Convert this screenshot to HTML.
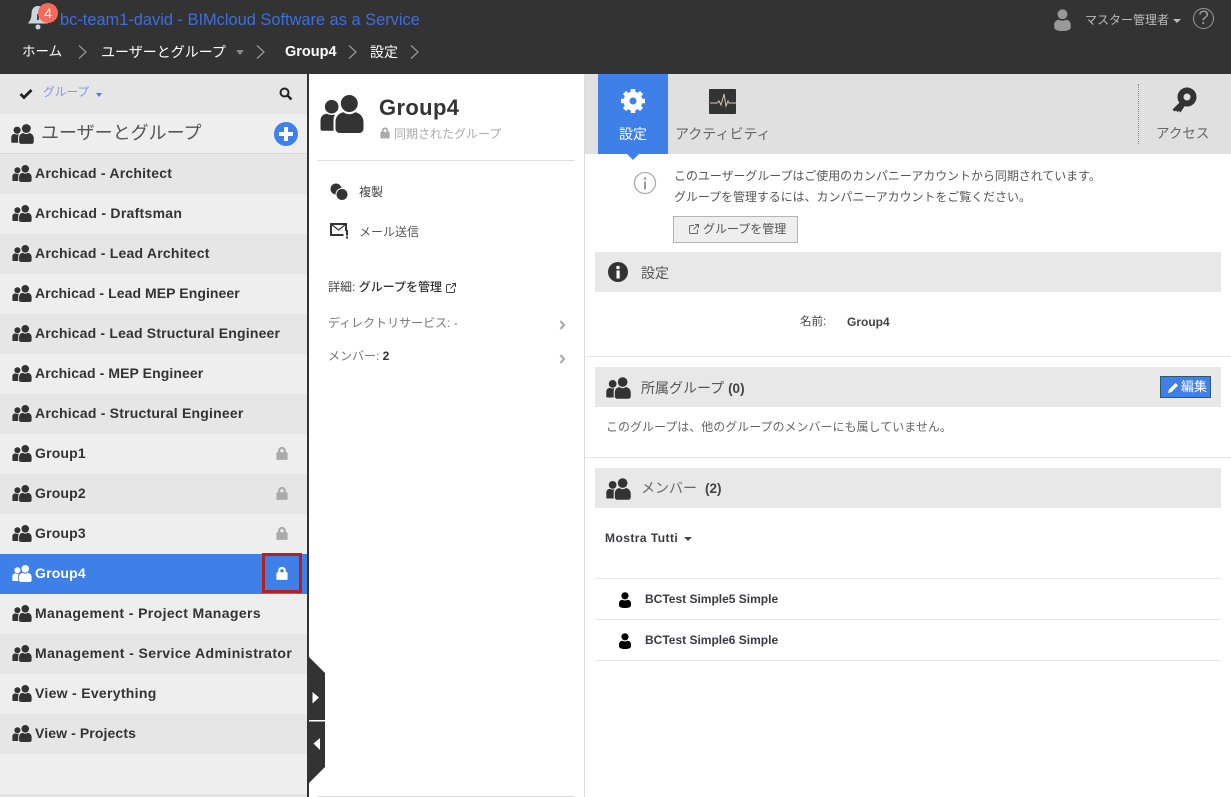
<!DOCTYPE html>
<html lang="ja"><head><meta charset="utf-8"><title>BIMcloud</title>
<style>
html,body{margin:0;padding:0;width:1231px;height:797px;overflow:hidden;background:#fff}
body{position:relative;font-family:"Liberation Sans","Noto Sans CJK JP",sans-serif;color:#333}
.a{position:absolute}
.t{position:absolute;white-space:nowrap;line-height:20px;height:20px}
.row{position:absolute;left:0;width:307px;height:40px}
.row b{position:absolute;left:35px;top:9px;line-height:20px;font-size:14px;color:#333;white-space:nowrap;letter-spacing:.18px}
.row svg.g{position:absolute;left:12px;top:11px}
.row svg.l{position:absolute;left:276px;top:12px}
.d{background:#e6e6e6}.e{background:#eee}
.hd{position:absolute;left:595px;width:626px;height:40px;background:#e8e8e8}
.ln{position:absolute;height:1px;background:#e6e6e6}
.jp{color:#555;font-size:12px}
</style></head><body>
<svg width="0" height="0" style="position:absolute">
<defs>
<symbol id="grp" viewBox="0 0 44 38"><circle cx="11.700" cy="11.700" r="6.800"/><path d="M.5 34V26C.5 21.500 3 19 7 18.800 8.500 19.500 10 20 11.700 20c1.300 0 2.300-.2 3.300-.6-1 1.800-1.500 4-1.500 6.600V34c0 .7.100 1.300.3 1.800H2.500C1.300 35.800.5 35 .5 34z"/><circle cx="29.300" cy="8.500" r="8.500"/><path d="M15.500 33.500V27c0-5.500 3.500-9 8-9.800 1.700 1.300 3.700 2 5.800 2s4.100-.7 5.800-2c4.500.8 8.400 4.300 8.400 9.800v6.500c0 2.800-2 4.500-4.500 4.500H20c-2.500 0-4.500-1.700-4.500-4.500z"/></symbol>
<symbol id="lock" viewBox="0 0 14 16"><path fill-rule="evenodd" d="M2.500 6.500V4.800C2.500 2 4.500.3 7 .3s4.500 1.700 4.500 4.500v1.700h1c.6 0 1 .4 1 1v7c0 .6-.4 1-1 1h-11c-.6 0-1-.4-1-1v-7c0-.6.400-1 1-1zM5 6.500h4V4.800C9 3.500 8.200 2.700 7 2.700S5 3.500 5 4.800z"/></symbol>
<symbol id="ext" viewBox="0 0 10 10"><path d="M5 1.500H1.500a1 1 0 0 0-1 1v6a1 1 0 0 0 1 1h6a1 1 0 0 0 1-1V5.500M6 .5h3.500V4M9.300.7 4.500 5.500" fill="none" stroke="currentColor" stroke-width="1"/></symbol>
<symbol id="usr" viewBox="0 0 12 16"><circle cx="6" cy="3.800" r="3.600"/><path d="M0 13.500V11.500C0 9.200 1.600 8 3.200 7.800 4 8.200 5 8.500 6 8.500s2-.3 2.800-.7C10.400 8 12 9.200 12 11.500v2c0 1.500-2.500 2.500-6 2.500S0 15 0 13.500z"/></symbol>
</defs></svg>

<!-- top bar -->
<div class="a" style="left:0;top:0;width:1231px;height:74px;background:#333"></div>
<svg class="a" style="left:27px;top:5px" width="22" height="26" viewBox="0 0 22 26"><path d="M11 1C7 1 4.500 4 4.500 9c0 5-2 7-3.500 9.500h20C19.500 16 17.500 14 17.500 9c0-5-2.500-8-6.500-8z" fill="#c9d6dc"/><circle cx="11" cy="22" r="2.500" fill="#c9d6dc"/><rect x="10" y="9" width="2" height="6" fill="#444"/></svg>
<div class="a" style="left:38px;top:3px;width:20px;height:20px;border-radius:50%;background:#f26b5b;color:#fff;font-size:14px;line-height:20px;text-align:center">4</div>
<div class="t" style="left:60px;top:10px;font-size:16.400px;color:#3d6fdc">bc-team1-david - BIMcloud Software as a Service</div>
<div class="t" style="left:22px;top:42px;font-size:13.500px;color:#fff">ホーム</div>
<div class="t" style="left:101px;top:42px;font-size:14px;color:#fff">ユーザーとグループ</div>
<div class="a" style="left:236px;top:50px;border:4.500px solid transparent;border-top:5px solid #888;border-bottom:0"></div>
<div class="t" style="left:285px;top:42px;font-size:14.500px;font-weight:bold;color:#fff">Group4</div>
<div class="t" style="left:370px;top:42px;font-size:14px;color:#fff">設定</div>
<svg class="a" style="left:76px;top:44px" width="360" height="16" fill="none" stroke="#999" stroke-width="1.200"><path d="M3 1.500l7 6.500-7 6.500M181 1.500l7 6.500-7 6.500M273 1.500l7 6.500-7 6.500M335 1.500l7 6.500-7 6.500"/></svg>
<svg class="a" style="left:1054px;top:9px;fill:#999" width="17" height="22"><use href="#usr"/></svg>
<div class="t" style="left:1085px;top:10px;font-size:12px;color:#bbb">マスター管理者</div>
<div class="a" style="left:1173px;top:19px;border:4px solid transparent;border-top:4px solid #bbb;border-bottom:0"></div>
<div class="a" style="left:1193px;top:8px;width:19px;height:19px;border:1.500px solid #999;border-radius:50%;color:#999;font-size:19px;line-height:19px;text-align:center">?</div>

<!-- left sidebar -->
<div class="a" style="left:0;top:74px;width:307px;height:723px;background:#eee"></div>
<div class="a" style="left:0;top:74px;width:307px;height:40px;background:#e6e6e6"></div>
<div class="a" style="left:307px;top:74px;width:2px;height:723px;background:#333"></div>
<svg class="a" style="left:19px;top:88px" width="14" height="12"><path d="M1.500 6l3.500 3.500L12.500 2" fill="none" stroke="#222" stroke-width="2.800"/></svg>
<div class="t" style="left:43px;top:83px;font-size:11.700px;color:#7b9be8">グループ</div>
<div class="a" style="left:96px;top:93px;border:3.500px solid transparent;border-top:4px solid #4a7fe0;border-bottom:0"></div>
<svg class="a" style="left:279px;top:87px" width="14" height="14"><circle cx="5.500" cy="5.500" r="4" fill="none" stroke="#222" stroke-width="2"/><path d="M8.500 8.500l4 4" stroke="#222" stroke-width="2.500"/></svg>
<svg class="a" style="left:11px;top:124px;fill:#333" width="23" height="20"><use href="#grp"/></svg>
<div class="t" style="left:41px;top:123px;font-size:18px;color:#555">ユーザーとグループ</div>
<div class="a" style="left:274px;top:122px;width:24px;height:24px;border-radius:50%;background:#3f80ea"></div>
<div class="a" style="left:279px;top:132px;width:14px;height:4px;background:#fff"></div>
<div class="a" style="left:284px;top:127px;width:4px;height:14px;background:#fff"></div>
<div class="a" style="left:0;top:153px;width:307px;height:1px;background:#d8d8d8"></div>

<div class="row d" style="top:154px"><svg class="g" width="20" height="17" fill="#333"><use href="#grp"/></svg><b style="letter-spacing:.23px">Archicad - Architect</b></div>
<div class="row e" style="top:194px"><svg class="g" width="20" height="17" fill="#333"><use href="#grp"/></svg><b style="letter-spacing:.28px">Archicad - Draftsman</b></div>
<div class="row d" style="top:234px"><svg class="g" width="20" height="17" fill="#333"><use href="#grp"/></svg><b style="letter-spacing:.22px">Archicad - Lead Architect</b></div>
<div class="row e" style="top:274px"><svg class="g" width="20" height="17" fill="#333"><use href="#grp"/></svg><b style="letter-spacing:.07px">Archicad - Lead MEP Engineer</b></div>
<div class="row d" style="top:314px"><svg class="g" width="20" height="17" fill="#333"><use href="#grp"/></svg><b>Archicad - Lead Structural Engineer</b></div>
<div class="row e" style="top:354px"><svg class="g" width="20" height="17" fill="#333"><use href="#grp"/></svg><b style="letter-spacing:.09px">Archicad - MEP Engineer</b></div>
<div class="row d" style="top:394px"><svg class="g" width="20" height="17" fill="#333"><use href="#grp"/></svg><b style="letter-spacing:.21px">Archicad - Structural Engineer</b></div>
<div class="row e" style="top:434px"><svg class="g" width="20" height="17" fill="#333"><use href="#grp"/></svg><b>Group1</b><svg class="l" width="12" height="15" fill="#aaa"><use href="#lock"/></svg></div>
<div class="row d" style="top:474px"><svg class="g" width="20" height="17" fill="#333"><use href="#grp"/></svg><b>Group2</b><svg class="l" width="12" height="15" fill="#aaa"><use href="#lock"/></svg></div>
<div class="row e" style="top:514px"><svg class="g" width="20" height="17" fill="#333"><use href="#grp"/></svg><b>Group3</b><svg class="l" width="12" height="15" fill="#aaa"><use href="#lock"/></svg></div>
<div class="row" style="top:554px;background:#3f7fe8"><svg class="g" width="20" height="17" fill="#fff"><use href="#grp"/></svg><b style="color:#fff">Group4</b><svg class="l" width="12" height="15" fill="#fff"><use href="#lock"/></svg></div>
<div class="a" style="left:262px;top:553px;width:34px;height:34px;border:3px solid #b22222"></div>
<div class="row e" style="top:594px"><svg class="g" width="20" height="17" fill="#333"><use href="#grp"/></svg><b style="letter-spacing:.39px">Management - Project Managers</b></div>
<div class="row d" style="top:634px"><svg class="g" width="20" height="17" fill="#333"><use href="#grp"/></svg><b style="letter-spacing:.42px">Management - Service Administrator</b></div>
<div class="row e" style="top:674px"><svg class="g" width="20" height="17" fill="#333"><use href="#grp"/></svg><b style="letter-spacing:.3px">View - Everything</b></div>
<div class="row d" style="top:714px"><svg class="g" width="20" height="17" fill="#333"><use href="#grp"/></svg><b style="letter-spacing:.11px">View - Projects</b></div>
<div class="a" style="left:0;top:794px;width:307px;height:3px;background:#e4e4e4"></div>

<!-- collapse handles -->
<svg class="a" style="left:307px;top:657px" width="18" height="127"><path d="M0 0h2l16 16v94L2 126v1H0z" fill="#333"/><rect x="2" y="63" width="16" height="1.500" fill="#fff"/><path d="M5.500 35l6.500 5.500-6.500 6z" fill="#fff"/><path d="M13 81l-6.500 5.500 6.500 6.500z" fill="#fff"/></svg>

<!-- middle column -->
<div class="a" style="left:584px;top:74px;width:1px;height:723px;background:#dcdcdc"></div>
<svg class="a" style="left:320px;top:95px;fill:#333" width="44" height="38"><use href="#grp"/></svg>
<div class="t" style="left:379px;top:95px;font-size:22px;font-weight:bold;line-height:26px;height:26px;color:#333;letter-spacing:.35px">Group4</div>
<svg class="a" style="left:380px;top:127px" width="10" height="12" fill="#aaa"><use href="#lock"/></svg>
<div class="t" style="left:394px;top:124px;font-size:12px;color:#aaa">同期されたグループ</div>
<div class="a" style="left:318px;top:160px;width:256px;height:1px;background:#ddd"></div>
<svg class="a" style="left:330px;top:183px" width="19" height="18"><circle cx="6" cy="6" r="5.500" fill="#333"/><circle cx="12" cy="11.500" r="6.500" fill="#fff"/><circle cx="12" cy="11.500" r="5.500" fill="#333"/></svg>
<div class="t jp" style="left:359px;top:182px;color:#444">複製</div>
<svg class="a" style="left:330px;top:223px" width="19" height="18"><rect x="1" y="1" width="15" height="11" fill="none" stroke="#333" stroke-width="2"/><path d="M1 1l7.500 6 7.500-6" fill="none" stroke="#333" stroke-width="1.200"/><rect x="13.500" y="8" width="4.500" height="6" fill="#fff"/><rect x="16" y="7" width="2" height="5.500" fill="#333"/><rect x="16" y="13.500" width="2" height="2" fill="#333"/></svg>
<div class="t jp" style="left:359px;top:222px">メール送信</div>
<div class="t jp" style="left:328px;top:277px;color:#444">詳細: <span style="color:#333;font-weight:500">グループを管理</span></div>
<svg class="a" style="left:446px;top:283px;color:#444" width="10" height="10"><use href="#ext"/></svg>
<div class="t" style="left:328px;top:313px;font-size:12px;color:#777">ディレクトリサービス: -</div>
<div class="t" style="left:328px;top:346px;font-size:12px;color:#777">メンバー: <b style="color:#333;font-size:12px">2</b></div>
<svg class="a" style="left:559px;top:319px" width="8" height="50" fill="none" stroke="#aaa" stroke-width="2.200"><path d="M1.500 2l3.500 4-3.500 4M1.500 36l3.500 4-3.500 4"/></svg>

<!-- tabs -->
<div class="a" style="left:585px;top:74px;width:646px;height:80px;background:#e0e0e0"></div>
<div class="a" style="left:598px;top:74px;width:70px;height:80px;background:#3f7fe8"></div>
<div class="a" style="left:627px;top:154px;border:6px solid transparent;border-top:6px solid #3f7fe8;border-bottom:0"></div>
<svg class="a" style="left:620px;top:88px" width="26" height="26" viewBox="0 0 26 26"><circle cx="13" cy="13" r="6.500" fill="none" stroke="#fff" stroke-width="6"/><g stroke="#fff" stroke-width="4.500"><path d="M13 1v5M13 20v5M1 13h5M20 13h5M4.500 4.500l3.500 3.500M18 18l3.500 3.500M21.500 4.500L18 8M8 18l-3.500 3.500"/></g></svg>
<div class="t" style="left:619px;top:124px;font-size:14px;color:#fff">設定</div>
<svg class="a" style="left:709px;top:89px" width="28" height="26"><rect width="27" height="25" rx="1" fill="#333"/><path d="M1 14h7l2-2 2 4 3-11 2 12 2-5 1 2h7" fill="none" stroke="#d8c9a8" stroke-width="1"/></svg>
<div class="t" style="left:675px;top:124px;font-size:14px;color:#666">アクティビティ</div>
<div class="a" style="left:1138px;top:84px;width:0;height:60px;border-left:1px dotted #888"></div>
<svg class="a" style="left:1171px;top:87px" width="26" height="30" viewBox="0 0 26 30"><circle cx="16" cy="10" r="6.500" fill="none" stroke="#333" stroke-width="6"/><path d="M11 13L1.500 22.500l2 2 1.500-1 1.500 1.500 1.500-1 1.500 1.500L15 17z" fill="#333"/></svg>
<div class="t" style="left:1156px;top:124px;font-size:13.500px;color:#666">アクセス</div>

<!-- info -->
<svg class="a" style="left:633px;top:171px" width="24" height="24"><circle cx="12" cy="12" r="10.500" fill="none" stroke="#aaa" stroke-width="1.300"/><circle cx="12" cy="7.500" r="1.300" fill="#999"/><rect x="11" y="10.500" width="2" height="8" fill="#999"/></svg>
<div class="t" style="left:674px;top:166px;font-size:11.950px;color:#555">このユーザーグループはご使用のカンパニーアカウントから同期されています。</div>
<div class="t" style="left:674px;top:187px;font-size:11.950px;color:#555">グループを管理するには、カンパニーアカウントをご覧ください。</div>
<div class="a" style="left:673px;top:216px;width:123px;height:25px;border:1px solid #b4b4b4;background:#eee"></div>
<svg class="a" style="left:689px;top:224px;color:#666" width="10" height="10"><use href="#ext"/></svg>
<div class="t" style="left:703px;top:219px;font-size:12px;color:#555">グループを管理</div>

<div class="hd" style="top:252px"></div>
<svg class="a" style="left:608px;top:262px" width="20" height="20"><circle cx="10" cy="10" r="10" fill="#333"/><circle cx="10" cy="5.500" r="1.800" fill="#fff"/><rect x="8.500" y="8.500" width="3.200" height="8" fill="#fff"/></svg>
<div class="t" style="left:641px;top:263px;font-size:14px;color:#555">設定</div>
<div class="t" style="left:800px;top:312px;font-size:11.500px;color:#444">名前:</div>
<div class="t" style="left:847px;top:312px;font-size:12px;font-weight:bold;color:#444">Group4</div>
<div class="ln" style="left:585px;top:356px;width:646px"></div>

<div class="hd" style="top:367px"></div>
<svg class="a" style="left:606px;top:377px;fill:#333" width="25" height="22"><use href="#grp"/></svg>
<div class="t" style="left:641px;top:378px;font-size:14px;color:#555">所属グループ <b style="color:#444;font-size:13.500px">(0)</b></div>
<div class="a" style="left:1160px;top:376px;width:49px;height:20px;border:1px solid #2d5a68;background:#3f7fe8"></div>
<svg class="a" style="left:1168px;top:382px" width="11" height="11"><path d="M0 11l1-3.500L7.500 1 10 3.500 3.500 10z" fill="#fff"/></svg>
<div class="t" style="left:1181px;top:377px;font-size:13px;color:#fff">編集</div>
<div class="t" style="left:606px;top:417px;font-size:12px;color:#666">このグループは、他のグループのメンバーにも属していません。</div>
<div class="ln" style="left:585px;top:457px;width:646px"></div>

<div class="hd" style="top:468px"></div>
<svg class="a" style="left:606px;top:478px;fill:#333" width="25" height="22"><use href="#grp"/></svg>
<div class="t" style="left:641px;top:478px;font-size:14px;color:#666">メンバー</div>
<div class="t" style="left:705px;top:479px;font-size:13.500px;font-weight:bold;color:#444">(2)</div>
<div class="t" style="left:605px;top:528px;font-size:12px;font-weight:bold;color:#3a3a45;letter-spacing:.45px">Mostra Tutti</div>
<div class="a" style="left:684px;top:537px;border:4px solid transparent;border-top:4px solid #444;border-bottom:0"></div>
<div class="ln" style="left:595px;top:578px;width:626px"></div>
<svg class="a" style="left:619px;top:592px;fill:#000" width="12" height="16"><use href="#usr"/></svg>
<div class="t" style="left:645px;top:589px;font-size:12px;font-weight:bold;color:#3a3a45">BCTest Simple5 Simple</div>
<div class="ln" style="left:595px;top:619px;width:626px"></div>
<svg class="a" style="left:619px;top:633px;fill:#000" width="12" height="16"><use href="#usr"/></svg>
<div class="t" style="left:645px;top:630px;font-size:12px;font-weight:bold;color:#3a3a45">BCTest Simple6 Simple</div>
<div class="ln" style="left:595px;top:660px;width:626px"></div>
<div class="a" style="left:318px;top:796px;width:256px;height:1px;background:#d8d8d8"></div>
</body></html>
